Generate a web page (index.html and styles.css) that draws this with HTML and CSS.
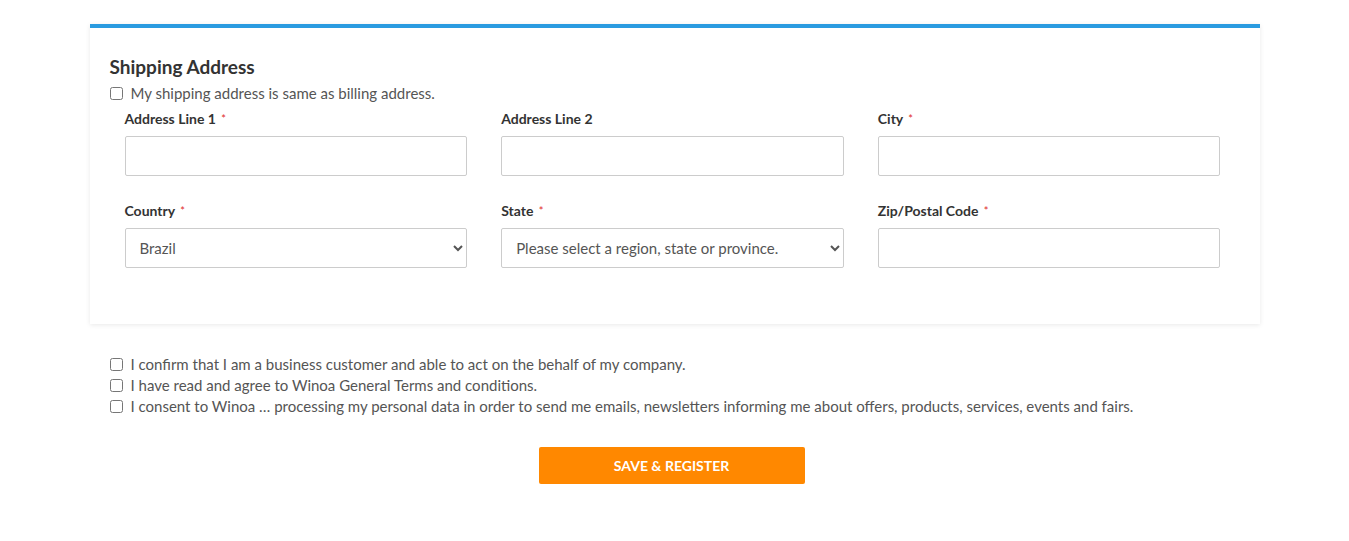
FILE: index.html
```html
<!DOCTYPE html>
<html lang="en">
<head>
<meta charset="utf-8">
<title>Shipping Address</title>
<link rel="stylesheet" href="styles.css">
</head>
<body>
<div class="container">
  <section class="card">
    <h2 class="card-title">Shipping Address</h2>
    <label class="check check-same"><input type="checkbox"><span>My shipping address is same as billing address.</span></label>
    <div class="fields">
      <div class="field">
        <label class="field-label">Address Line 1 <span class="req">*</span></label>
        <input class="control" type="text">
      </div>
      <div class="field">
        <label class="field-label">Address Line 2</label>
        <input class="control" type="text">
      </div>
      <div class="field">
        <label class="field-label">City <span class="req">*</span></label>
        <input class="control" type="text">
      </div>
      <div class="field">
        <label class="field-label">Country <span class="req">*</span></label>
        <select class="control control-select"><option>Brazil</option></select>
      </div>
      <div class="field">
        <label class="field-label">State <span class="req">*</span></label>
        <select class="control control-select"><option>Please select a region, state or province.</option></select>
      </div>
      <div class="field">
        <label class="field-label">Zip/Postal Code <span class="req">*</span></label>
        <input class="control" type="text">
      </div>
    </div>
  </section>
  <div class="consents">
    <label class="check"><input type="checkbox"><span>I confirm that I am a business customer and able to act on the behalf of my company.</span></label>
    <label class="check"><input type="checkbox"><span>I have read and agree to Winoa General Terms and conditions.</span></label>
    <label class="check"><input type="checkbox"><span>I consent to Winoa … processing my personal data in order to send me emails, newsletters informing me about offers, products, services, events and fairs.</span></label>
  </div>
  <div class="actions">
    <button class="btn-primary" type="button">SAVE &amp; REGISTER</button>
  </div>
</div>
</body>
</html>
```

FILE: styles.css
```css
* { box-sizing: border-box; }
body {
  margin: 0;
  background: #fff;
  font-family: Lato, "Liberation Sans", sans-serif;
  color: #555;
}
.container {
  width: 1170px;
  margin: 0 auto;
  padding-top: 24px;
}
.card {
  border-top: 4px solid #2a9be0;
  background: #fff;
  box-shadow: 0 1px 5px rgba(0,0,0,0.09);
  padding: 26px 20px 56px 20px;
}
.card-title {
  margin: 0;
  font-size: 19px;
  line-height: 26px;
  font-weight: 700;
  color: #333;
}
.check {
  display: flex;
  align-items: center;
  font-size: 15px;
  line-height: 21px;
  color: #555;
}
.check-same {
  margin-top: 3px;
}
.check input {
  margin: 0 8px 0 0;
  width: 13px;
  height: 13px;
}
.fields {
  display: grid;
  grid-template-columns: repeat(3, 1fr);
  column-gap: 34px;
  row-gap: 25px;
  padding: 5px 19px 0 15px;
}
.field {
  display: flex;
  flex-direction: column;
}
.field-label {
  font-size: 14px;
  line-height: 20px;
  font-weight: 700;
  color: #333;
  margin-bottom: 7px;
}
.req {
  color: #e02b27;
  font-size: 11px;
  font-weight: 400;
  margin-left: 2px;
  vertical-align: top;
}
.control {
  width: 100%;
  height: 40px;
  border: 1px solid #ccc;
  border-radius: 2px;
  background: #fff;
  padding: 0 14px;
  font-family: inherit;
  font-size: 15px;
  color: #555;
}
.control-select {
  padding-left: 10px;
}
.consents {
  padding: 30px 20px 0 20px;
  display: flex;
  flex-direction: column;
}
.actions {
  display: flex;
  justify-content: center;
  padding: 30px 6px 0 0;
}
.btn-primary {
  width: 266px;
  height: 37px;
  border: 0;
  border-radius: 2px;
  background: #ff8800;
  color: #fff;
  font-family: inherit;
  font-size: 14px;
  font-weight: 700;
}
```
